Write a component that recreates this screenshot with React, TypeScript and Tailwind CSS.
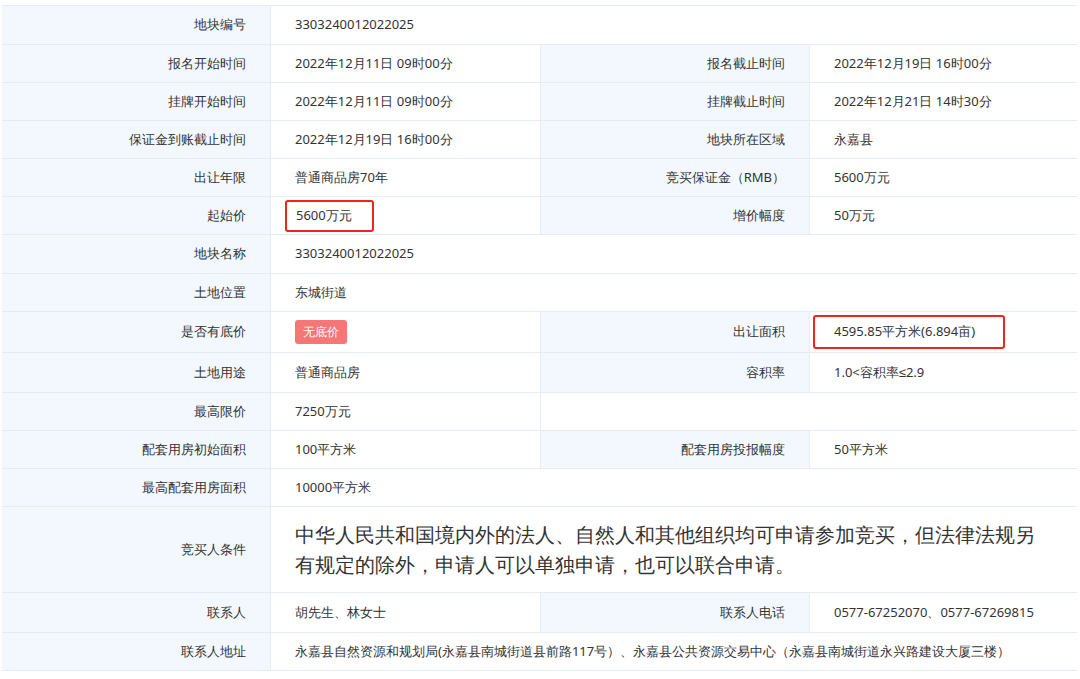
import React from 'react'

type Row = { h: string; l1: string; v1: React.ReactNode; l2?: string; v2?: React.ReactNode; span?: boolean; empty?: boolean }

const rows: Row[] = [
  { h: 'h-[39px]', l1: '地块编号', v1: '3303240012022025', span: true },
  { h: 'h-[38px]', l1: '报名开始时间', v1: '2022年12月11日 09时00分', l2: '报名截止时间', v2: '2022年12月19日 16时00分' },
  { h: 'h-[38px]', l1: '挂牌开始时间', v1: '2022年12月11日 09时00分', l2: '挂牌截止时间', v2: '2022年12月21日 14时30分' },
  { h: 'h-[38px]', l1: '保证金到账截止时间', v1: '2022年12月19日 16时00分', l2: '地块所在区域', v2: '永嘉县' },
  { h: 'h-[38px]', l1: '出让年限', v1: '普通商品房70年', l2: '竞买保证金（RMB）', v2: '5600万元' },
  {
    h: 'h-[38px]', l1: '起始价',
    v1: <span className="-ml-[10px] inline-flex h-[32px] w-[89px] items-center rounded-[3px] border-2 border-[#f0241c] pl-[9px]">5600万元</span>,
    l2: '增价幅度', v2: '50万元',
  },
  { h: 'h-[39px]', l1: '地块名称', v1: '3303240012022025', span: true },
  { h: 'h-[38px]', l1: '土地位置', v1: '东城街道', span: true },
  {
    h: 'h-[41px]', l1: '是否有底价',
    v1: <span className="inline-block rounded-[3px] bg-[#f47677] px-[8px] py-[3px] text-[12px] text-white">无底价</span>,
    l2: '出让面积',
    v2: <span className="-ml-[21px] inline-flex h-[34px] w-[192px] items-center rounded-[3px] border-2 border-[#f0241c] pl-[19px]">4595.85平方米(6.894亩)</span>,
  },
  { h: 'h-[40px]', l1: '土地用途', v1: '普通商品房', l2: '容积率', v2: '1.0<容积率≤2.9' },
  { h: 'h-[38px]', l1: '最高限价', v1: '7250万元', empty: true },
  { h: 'h-[38px]', l1: '配套用房初始面积', v1: '100平方米', l2: '配套用房投报幅度', v2: '50平方米' },
  { h: 'h-[38px]', l1: '最高配套用房面积', v1: '10000平方米', span: true },
  {
    h: 'h-[86px]', l1: '竞买人条件',
    v1: <span className="block pr-[30px] text-[20px] leading-[30px]">中华人民共和国境内外的法人、自然人和其他组织均可申请参加竞买，但法律法规另有规定的除外，申请人可以单独申请，也可以联合申请。</span>,
    span: true,
  },
  { h: 'h-[40px]', l1: '联系人', v1: '胡先生、林女士', l2: '联系人电话', v2: '0577-67252070、0577-67269815' },
  { h: 'h-[38px]', l1: '联系人地址', v1: '永嘉县自然资源和规划局(永嘉县南城街道县前路117号）、永嘉县公共资源交易中心（永嘉县南城街道永兴路建设大厦三楼）', span: true },
]

const label = 'flex items-center justify-end bg-[#f2f8fd] pr-[24px] border-r border-[#e6edf2]'
const value = 'flex items-center pl-[24px]'

export default function App() {
  return (
    <div className="h-[679px] w-[1080px] bg-white pt-[5px] pl-[2px] text-[13px] text-[#333] [font-family:'Liberation_Sans','Noto_Sans_CJK_SC',sans-serif]">
      <div className="w-[1075px] border-t border-[#e6edf2]">
        {rows.map((r, i) => (
          <div key={i} className={`grid grid-cols-[269px_270px_269px_267px] border-b border-[#e6edf2] ${r.h}`}>
            <div className={label}>{r.l1}</div>
            {r.span ? (
              <div className={`${value} col-span-3`}>{r.v1}</div>
            ) : (
              <>
                <div className={`${value} border-r border-[#e6edf2]`}>{r.v1}</div>
                {r.empty ? (
                  <div className="col-span-2" />
                ) : (
                  <>
                    <div className={`${label} justify-center pr-0`}>{r.l2}</div>
                    <div className={value}>{r.v2}</div>
                  </>
                )}
              </>
            )}
          </div>
        ))}
      </div>
    </div>
  )
}
